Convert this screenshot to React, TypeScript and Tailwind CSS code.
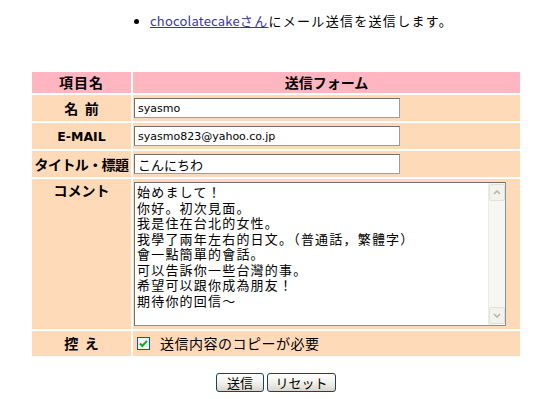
import React from 'react';

const JP = { fontFamily: '"Noto Sans CJK JP", "Noto Sans", sans-serif' };
const LATIN = { fontFamily: '"DejaVu Sans", "Noto Sans CJK JP", sans-serif' };

const COMMENT = [
  '始めまして！',
  '你好。初次見面。',
  '我是住在台北的女性。',
  '我學了兩年左右的日文。（普通話，繁體字）',
  '會一點簡單的會話。',
  '可以告訴你一些台灣的事。',
  '希望可以跟你成為朋友！',
  '期待你的回信～',
];

const Label = ({ children, top }: { children: React.ReactNode; top?: boolean }) => (
  <td
    className={`bg-[#ffdab9] w-[99px] p-0 text-center text-[14px] font-bold text-black ${top ? 'align-top pt-[1px]' : 'align-middle'}`}
  >
    {children}
  </td>
);

const TextField = ({ value, jp }: { value: string; jp?: boolean }) => (
  <input
    readOnly
    value={value}
    style={jp ? JP : LATIN}
    className={`block w-[266px] h-[20px] ml-[1px] px-[3px] bg-white border border-[#9c9c9c] border-t-[#6f6f6f] border-l-[#6f6f6f] text-black outline-none ${jp ? 'text-[13px]' : 'text-[11px]'}`}
  />
);

const Arrow = ({ up }: { up?: boolean }) => (
  <div className="h-[17px] w-[16px] flex items-center justify-center bg-[#f3f3ee] border border-[#e2e2dc] rounded-[2px]">
    <svg width="8" height="5" viewBox="0 0 8 5">
      <path d={up ? 'M1 4 L4 1 L7 4' : 'M1 1 L4 4 L7 1'} fill="none" stroke="#b4b4a8" strokeWidth="1.5" />
    </svg>
  </div>
);

const XpButton = ({ children, w }: { children: React.ReactNode; w: string }) => (
  <button
    className={`${w} h-[19px] rounded-[3px] border border-[#1b3f6b] bg-gradient-to-b from-[#ffffff] via-[#f1f1ec] to-[#d9d5c9] text-[13px] text-black leading-none`}
    style={JP}
  >
    {children}
  </button>
);

export default function App() {
  return (
    <div className="w-[543px] h-[399px] bg-white overflow-hidden" style={JP}>
      <div className="flex items-center pt-[11px] pl-[134px] text-[13px] text-black h-[20px] box-content">
        <span className="w-[5px] h-[5px] rounded-full bg-black mr-[11px]" />
        <a className="text-[#38389a] underline">
          <span className="tracking-[0.2px]">chocolatecake</span>
          <span className="tracking-[1.3px]">さん</span>
        </a>
        <span className="tracking-[1.3px]">にメール送信を送信します。</span>
      </div>

      <table className="ml-[30px] mt-[39px] w-[492px] border-separate border-spacing-[2px]">
        <tbody>
          <tr className="h-[20px]">
            <td className="bg-[#ffb6c1] w-[99px] p-0 text-center text-[14px] font-bold tracking-[1px]">項目名</td>
            <td className="bg-[#ffb6c1] p-0 text-center text-[14px] font-bold">送信フォーム</td>
          </tr>
          <tr className="h-[26px]">
            <Label>名&nbsp;&nbsp;前</Label>
            <td className="bg-[#ffdab9] p-0 align-middle">
              <TextField value="syasmo" />
            </td>
          </tr>
          <tr className="h-[26px]">
            <Label>
              <span style={LATIN} className="text-[12.5px]">E-MAIL</span>
            </Label>
            <td className="bg-[#ffdab9] p-0 align-middle">
              <TextField value="syasmo823@yahoo.co.jp" />
            </td>
          </tr>
          <tr className="h-[26px]">
            <Label>
              <span className="tracking-[-0.6px]">タイトル・標題</span>
            </Label>
            <td className="bg-[#ffdab9] p-0 align-middle">
              <TextField value="こんにちわ" jp />
            </td>
          </tr>
          <tr className="h-[150px]">
            <Label top>コメント</Label>
            <td className="bg-[#ffdab9] p-0 align-middle">
              <div className="ml-[1px] w-[372px] h-[144px] flex bg-white border border-[#8e8e8e] border-t-[#6f6f6f] border-l-[#6f6f6f]">
                <div className="flex-1 pl-[2px] pt-[1px] text-[13px] leading-[15.5px] tracking-[1.2px] text-black">
                  {COMMENT.map((line, i) => (
                    <div key={i} className="whitespace-pre">{line}</div>
                  ))}
                </div>
                <div className="w-[17px] flex flex-col justify-between bg-[#f6f6f2] border-l border-[#ececE6] py-[1px]">
                  <Arrow up />
                  <Arrow />
                </div>
              </div>
            </td>
          </tr>
          <tr className="h-[25px]">
            <Label>控&nbsp;&nbsp;え</Label>
            <td className="bg-[#ffdab9] p-0 align-middle">
              <div className="flex items-center pl-[4px] text-[14px] text-black">
                <svg width="13" height="13" viewBox="0 0 13 13" className="mr-[10px]">
                  <rect x="0.5" y="0.5" width="12" height="12" fill="#f2f2ee" stroke="#1c5180" />
                  <path d="M3 6.5 L5.3 9 L10 3.8" fill="none" stroke="#21a121" strokeWidth="2" />
                </svg>
                <span className="tracking-[0.5px]">送信内容のコピーが必要</span>
              </div>
            </td>
          </tr>
        </tbody>
      </table>

      <div className="flex justify-center gap-[3px] mt-[15px] pl-[9px]">
        <XpButton w="w-[48px]">送信</XpButton>
        <XpButton w="w-[69px]">リセット</XpButton>
      </div>
    </div>
  );
}
